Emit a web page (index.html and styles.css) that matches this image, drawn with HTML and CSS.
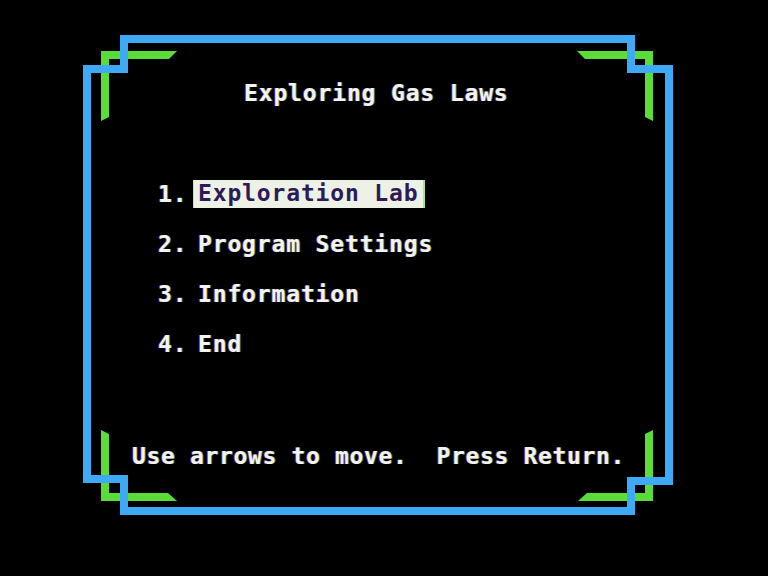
FILE: index.html
```html
<!DOCTYPE html>
<html lang="en">
<head>
<meta charset="utf-8">
<title>Exploring Gas Laws</title>
<link rel="stylesheet" href="styles.css">
</head>
<body>
<div class="screen">
  <svg class="frame" width="768" height="576" viewBox="0 0 768 576" aria-hidden="true">
    <polygon class="green" points="101,51 177,51 169,59 109,59 109,117 101,121"/>
    <polygon class="green" points="577,51 653,51 653,121 645,117 645,59 585,59"/>
    <polygon class="green" points="101,430 109,434 109,493 168,493 177,501 101,501"/>
    <polygon class="green" points="645,434 653,430 653,501 578,501 587,493 645,493"/>
    <path class="blue" d="M124 39 H631 V69 H669 V481 H631 V511 H124 V479 H87 V69 H124 Z"/>
  </svg>
  <div class="content">
    <h1 class="title">Exploring Gas Laws</h1>
    <ol class="menu">
      <li class="item"><span class="num">1.</span><span class="label selected">Exploration Lab</span></li>
      <li class="item"><span class="num">2.</span><span class="label">Program Settings</span></li>
      <li class="item"><span class="num">3.</span><span class="label">Information</span></li>
      <li class="item"><span class="num">4.</span><span class="label">End</span></li>
    </ol>
    <p class="footer">Use arrows to move.  Press Return.</p>
  </div>
</div>
</body>
</html>
```

FILE: styles.css
```css
html, body {
  margin: 0;
  padding: 0;
  background: #000;
}

.screen {
  display: grid;
  width: 768px;
  height: 576px;
  background: #000;
  overflow: hidden;
}

.frame {
  grid-area: 1 / 1;
  display: block;
  filter: blur(0.5px);
}

.frame .blue {
  fill: none;
  stroke: #3eaaf6;
  stroke-width: 8;
  stroke-linejoin: miter;
}

.frame .green {
  fill: #5cdc3a;
}

.content {
  grid-area: 1 / 1;
  display: flex;
  flex-direction: column;
  padding-top: 80px;
  font-family: "DejaVu Sans Mono", "Liberation Mono", monospace;
  font-weight: bold;
  font-size: 23px;
  line-height: 27px;
  letter-spacing: 0.85px;
  color: #f3f3f0;
  text-shadow: -1px 0 rgba(190, 70, 255, 0.55), 1px 0 rgba(100, 255, 70, 0.45);
}

.title {
  margin: 0;
  padding-left: 244px;
  font-size: inherit;
  font-weight: inherit;
}

.menu {
  list-style: none;
  margin: 74px 0 0 0;
  padding: 0 0 0 158px;
  display: flex;
  flex-direction: column;
  gap: 23px;
}

.item {
  display: grid;
  grid-template-columns: 40px auto;
  justify-content: start;
  height: 27px;
}

.label {
  display: block;
}

.selected {
  margin: -1px 0 0 -5px;
  padding: 0 7px 1px 5px;
  background: #eef2e6;
  color: #2c1b58;
  text-shadow: none;
  box-shadow: inset 1px 0 0 #b9f08a, inset -2px 0 0 #a8e878;
}

.footer {
  margin: 85px 0 0 0;
  padding-left: 132px;
  letter-spacing: 0.65px;
  white-space: pre;
}
```
